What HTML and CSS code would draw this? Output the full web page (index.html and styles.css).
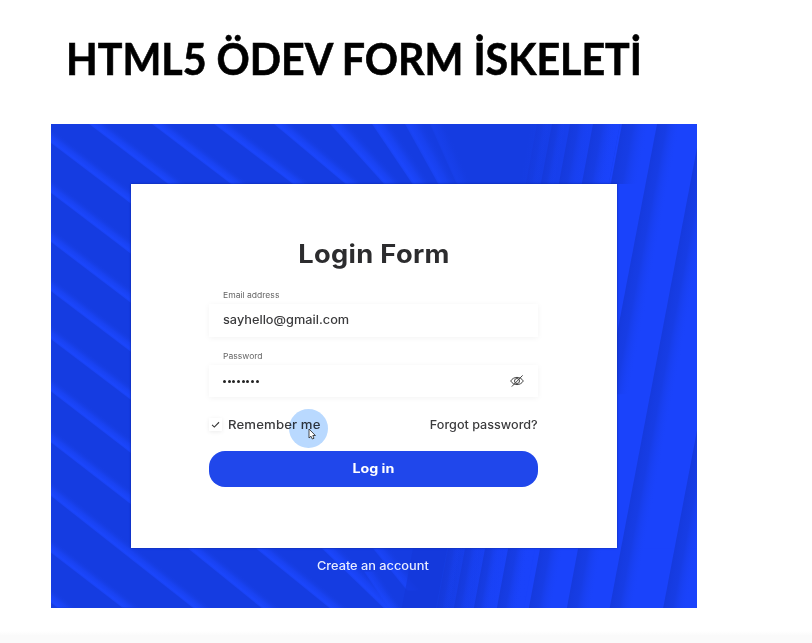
FILE: index.html
```html
<!DOCTYPE html>
<html lang="tr">
<head>
<meta charset="utf-8">
<title>HTML5 Ödev Form İskeleti</title>
<link rel="stylesheet" href="styles.css">
</head>
<body>
<h1 class="page-title"><span>HTML5 ÖDEV FORM İSKELETİ</span></h1>
<main class="panel">
  <svg class="panel-art" viewBox="51 124 646 483" preserveAspectRatio="none" aria-hidden="true">
    <defs>
      <linearGradient id="light"><stop offset="0" stop-color="#1b46fb" stop-opacity=".7"/><stop offset=".15" stop-color="#1b46fc"/><stop offset=".5" stop-color="#1a44f6" stop-opacity=".75"/><stop offset="1" stop-color="#163de2" stop-opacity="0"/></linearGradient>
      <linearGradient id="dark"><stop offset="0" stop-color="#1539da" stop-opacity=".9"/><stop offset=".4" stop-color="#163bde" stop-opacity=".75"/><stop offset="1" stop-color="#1a43fa" stop-opacity="0"/></linearGradient>
      <linearGradient id="base"><stop offset="0" stop-color="#1a43fb" stop-opacity="0"/><stop offset="1" stop-color="#1a43fb"/></linearGradient>
    </defs>
    <rect x="51" y="124" width="646" height="484" fill="#153ce1"/>
    <g transform="translate(530 124) skewX(-10.6)"><rect width="90" height="484" fill="url(#base)"/><rect x="90" width="180" height="484" fill="#1a43fb"/></g>
    <g transform="translate(450 548) skewX(-10.6)"><rect width="85" height="60" fill="url(#base)"/><rect x="85" width="200" height="60" fill="#1a43fb"/></g>
    <g fill="url(#light)">
      <rect width="20" height="62" transform="translate(89 124) skewX(52.8)"/>
      <rect width="20" height="62" transform="translate(152 124) skewX(52.8)"/>
      <rect width="20" height="62" transform="translate(214 124) skewX(52.8)"/>
      <rect width="20" height="62" transform="translate(274 124) skewX(50)"/>
      <rect width="20" height="62" transform="translate(330 124) skewX(42)"/>
      <rect width="20" height="62" transform="translate(372 124) skewX(34)"/>
      <rect width="20" height="62" opacity=".8" transform="translate(405 124) skewX(29)"/>
      <rect width="16" height="62" opacity=".35" transform="translate(430 124) skewX(24)"/>
      <rect width="20" height="84" transform="translate(26 124) skewX(52.8)"/>
      <rect width="20" height="84" transform="translate(26 174) skewX(52.8)"/>
      <rect width="20" height="84" transform="translate(26 223) skewX(52.8)"/>
      <rect width="20" height="84" transform="translate(26 272) skewX(52.8)"/>
      <rect width="20" height="84" transform="translate(26 320) skewX(52.8)"/>
      <rect width="20" height="84" transform="translate(26 372) skewX(52.4)"/>
      <rect width="20" height="84" transform="translate(26 423) skewX(52.4)"/>
      <rect width="20" height="132" transform="translate(26 476) skewX(51.8)"/>
      <rect width="20" height="74" transform="translate(26 533) skewX(52.4)"/>
      <rect width="20" height="24" transform="translate(26 583) skewX(52.4)"/>
      <rect width="20" height="60" transform="translate(188 548) skewX(51)"/>
      <rect width="20" height="60" transform="translate(256 548) skewX(51)"/>
      <rect width="20" height="60" transform="translate(322 548) skewX(46)"/>
      <rect width="18" height="42" opacity=".8" transform="translate(373 548) skewX(39)"/>
      <rect width="14" height="37" opacity=".7" transform="translate(364 571) skewX(34)"/>
    </g>
    <rect width="34" height="60" fill="#1438d8" opacity=".65" transform="translate(413 548) skewX(-10.6)"/>
    <g fill="url(#dark)">
      <rect width="13" height="60" opacity=".6" transform="translate(537 124) skewX(-10.6)"/>
      <rect width="14" height="60" transform="translate(552 124) skewX(-10.6)"/>
      <rect width="20" height="60" transform="translate(570 124) skewX(-10.6)"/>
      <rect width="23" height="60" transform="translate(593 124) skewX(-10.6)"/>
      <rect width="28" height="60" transform="translate(622 124) skewX(-10.6)"/>
      <rect width="24" height="270" transform="translate(657 124) skewX(-10.8)"/>
      <rect width="24" height="484" transform="translate(701.5 124) skewX(-10.75)"/>
      <rect width="24" height="204" transform="translate(702 404) skewX(-10.8)"/>
      <rect width="13" height="60" transform="translate(448 548) skewX(-10.6)"/>
      <rect width="15" height="60" transform="translate(465 548) skewX(-10.6)"/>
      <rect width="16" height="60" transform="translate(485 548) skewX(-10.6)"/>
      <rect width="21" height="60" transform="translate(508 548) skewX(-10.6)"/>
      <rect width="24" height="60" transform="translate(540 548) skewX(-10.6)"/>
      <rect width="25" height="60" transform="translate(578 548) skewX(-10.6)"/>
    </g>
  </svg>
  <section class="card">
    <h2 class="card-title"><span>Login Form</span></h2>
    <form class="form">
      <label class="label label-email" for="email">Email address</label>
      <div class="field" id="email"><span class="value">sayhello@gmail.com</span></div>
      <label class="label label-password" for="password">Password</label>
      <div class="field" id="password">
        <span class="dots"><i></i><i></i><i></i><i></i><i></i><i></i><i></i><i></i></span>
        <svg class="eye" viewBox="0 0 14 14" fill="none" stroke="#444" stroke-width="1"><path d="M.7 7C3.500 2.200 10.500 2.200 13.300 7 10.500 11.800 3.500 11.800 .7 7Z"/><circle cx="7" cy="7" r="2.500"/><path d="M1.800 12.600 12.600 1.400"/></svg>
      </div>
      <div class="options">
        <span class="check"><svg viewBox="0 0 10 10" fill="none" stroke="#333" stroke-width="1.200"><path d="M1.200 5.300 3.700 7.800 8.900 2.500"/></svg></span>
        <span class="remember"><span class="wide">Remember me</span>
          <span class="halo"></span>
          <svg class="cursor" viewBox="0 0 8 12"><path d="M1 1V10L3 8.200 4.300 11 6 10.300 4.800 7.500H7.400Z" fill="#fff" stroke="#222" stroke-width=".8"/></svg>
        </span>
        <span class="forgot">Forgot password?</span>
      </div>
      <button class="submit" type="button"><span>Log in</span></button>
    </form>
  </section>
  <p class="create"><span>Create an account</span></p>
</main>
<footer class="page-edge"></footer>
</body>
</html>
```
FILE: styles.css
```css
* { box-sizing: border-box; }
body {
  margin: 0;
  height: 643px;
  display: flex;
  flex-direction: column;
  overflow: hidden;
  background: #fff;
  font-family: Inter, "Liberation Sans", sans-serif;
  color: #3b3b3d;
}
.page-title {
  margin: 0;
  height: 124px;
  padding: 32px 0 0 66px;
  font: 700 43px/54px Lato, sans-serif;
  color: #000;
  white-space: nowrap;
}
.page-title span {
  display: inline-block;
  transform: scaleX(.957);
  transform-origin: left;
  -webkit-text-stroke: .6px #000;
}
.panel {
  position: relative;
  isolation: isolate;
  flex: none;
  width: 646px;
  height: 483.500px;
  margin-left: 51px;
  padding: 60px 80px 0;
  overflow: hidden;
}
.panel-art { position: absolute; inset: 0; z-index: -1; width: 100%; height: 100%; }
.card {
  width: 486px;
  height: 363.500px;
  padding: 53px 78px 0;
  background: #fff;
  box-shadow: 0 0 2px #0a2699;
}
.card-title {
  margin: 0;
  font-size: 25px;
  line-height: 34px;
  letter-spacing: .3px;
  text-align: center;
  color: #2c2c2e;
}
.card-title span { display: inline-block; transform: translateX(-.5px) scaleX(1.090); }
.form { display: flex; flex-direction: column; width: 329px; }
.label { align-self: flex-start; margin-left: 14px; font-size: 8px; line-height: 12px; transform: scaleX(1.070); transform-origin: left; color: #666; }
.label-email { margin-top: 18px; }
.label-password { margin-top: 13px; }
.field {
  display: flex;
  align-items: center;
  justify-content: space-between;
  height: 32px;
  margin-top: 3px;
  padding: 0 14px;
  box-shadow: 0 1px 6px rgba(0, 0, 0, .05);
}
.label-email + .field { height: 33px; margin-top: 3px; padding-bottom: 2px; }
.value { font-size: 11.700px; font-weight: 500; transform: scaleX(1.090); transform-origin: left; }
.dots { display: flex; gap: 1.700px; }
.dots i { width: 3px; height: 3px; border-radius: 50%; background: #222; }
.eye { width: 14px; height: 14px; }
.options { display: flex; align-items: center; height: 20px; margin-top: 17px; font-size: 12px; font-weight: 500; white-space: nowrap; }
.check { width: 13px; height: 13px; display: grid; place-items: center; box-shadow: 0 1px 4px rgba(0, 0, 0, .08); }
.check svg { width: 9px; height: 9px; }
.remember { position: relative; margin-left: 5.500px; }
.wide { display: inline-block; letter-spacing: .1px; transform: scaleX(1.100); transform-origin: left; }
.halo { position: absolute; z-index: 1; left: 61.500px; top: -8px; width: 39px; height: 39px; border-radius: 50%; background: #b9d9ff; mix-blend-mode: multiply; }
.cursor { position: absolute; z-index: 2; left: 80.500px; top: 11px; width: 8px; height: 12px; }
.forgot { margin-left: auto; transform: scaleX(1.050); transform-origin: right; }
.submit {
  height: 36px;
  margin-top: 17px;
  padding: 0;
  border: 0;
  border-radius: 16px;
  background: #2047eb;
  color: #fff;
  font: 700 12.500px/36px Inter, sans-serif;
}
.submit span { display: inline-block; transform: scaleX(1.140); }
.create { margin: 9.500px 0 0; text-align: center; font-size: 11.500px; line-height: 18px; font-weight: 500; color: #e8edff; }
.create span { display: inline-block; transform: translateX(-1.500px) scaleX(1.110); }
.page-edge { margin-top: auto; height: 12px; background: linear-gradient(#fff, #fafafa 40%); }
```
